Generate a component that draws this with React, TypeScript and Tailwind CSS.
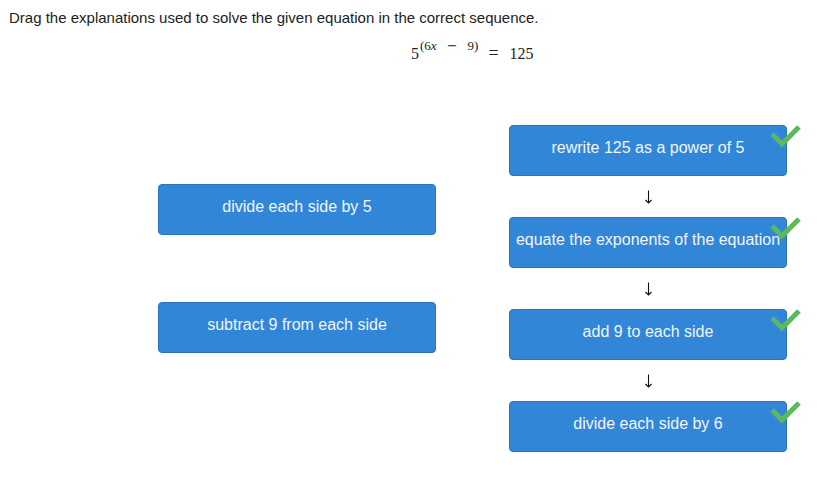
import React from "react";

function Check() {
  return (
    <svg
      className="absolute -right-[15px] -top-[1px] h-[24px] w-[32px]"
      viewBox="0 0 32 24"
      fill="none"
    >
      <path
        d="M3 9 L13 19 L30 2"
        stroke="#5cb85c"
        strokeWidth="5"
        strokeLinecap="butt"
        strokeLinejoin="miter"
      />
    </svg>
  );
}

function Tile({ text, checked }: { text: string; checked?: boolean }) {
  return (
    <div className="relative flex h-[51px] w-[278px] items-center justify-center rounded-[4px] border border-[#2a74bd] bg-[#3186d8] pb-[6px] text-[16px] text-[#f2f6fb]">
      <span className="whitespace-nowrap">{text}</span>
      {checked && <Check />}
    </div>
  );
}

function Arrow() {
  return (
    <div className="flex h-[41px] w-[278px] items-center justify-center">
      <svg width="9" height="14" viewBox="0 0 9 14" fill="none">
        <path d="M4.5 0.5 V13" stroke="#111" strokeWidth="1.1" />
        <path d="M1.5 10 L4.5 13 L7.5 10" stroke="#111" strokeWidth="1.1" />
      </svg>
    </div>
  );
}

export default function App() {
  return (
    <div
      className="h-[477px] w-[817px] bg-white"
      style={{ fontFamily: '"Liberation Sans", Arial, sans-serif' }}
    >
      <p className="pl-[9px] pt-[9px] text-[15px] leading-[18px] text-[#222]">
        Drag the explanations used to solve the given equation in the correct sequence.
      </p>

      {/* equation */}
      <div
        className="ml-[411px] mt-[13px] flex h-[22px] items-end text-[16px] text-[#222]"
        style={{ fontFamily: '"Liberation Serif", "Times New Roman", serif' }}
      >
        <span className="leading-none">5</span>
        <span className="relative -top-[10px] ml-[1px] flex text-[13px] leading-none">
          <span>
            (6<i>x</i>
          </span>
          <span
            className="ml-[10px]"
            style={{ fontFamily: '"DejaVu Sans", sans-serif' }}
          >
            −
          </span>
          <span className="ml-[10px]">9)</span>
        </span>
        <span className="ml-[10px] text-[18px] leading-none">=</span>
        <span className="ml-[11px] leading-none">125</span>
      </div>

      <div className="mt-[63px] flex">
        {/* answer bank */}
        <div className="ml-[158px] flex flex-col gap-[67px] pt-[59px]">
          <Tile text="divide each side by 5" />
          <Tile text="subtract 9 from each side" />
        </div>

        {/* ordered sequence */}
        <div className="ml-[73px] flex flex-col">
          <Tile text="rewrite 125 as a power of 5" checked />
          <Arrow />
          <Tile text="equate the exponents of the equation" checked />
          <Arrow />
          <Tile text="add 9 to each side" checked />
          <Arrow />
          <Tile text="divide each side by 6" checked />
        </div>
      </div>
    </div>
  );
}
